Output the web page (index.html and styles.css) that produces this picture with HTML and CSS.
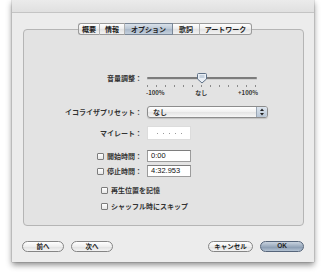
FILE: index.html
```html
<!DOCTYPE html>
<html lang="ja">
<head>
<meta charset="utf-8">
<link rel="stylesheet" href="styles.css">
</head>
<body>
<div class="window">
  <div class="titlebar"></div>
  <div class="tabbox">
    <div class="tabs">
      <span class="tab t1">概要</span>
      <span class="tab t2">情報</span>
      <span class="tab t3 sel">オプション</span>
      <span class="tab t4">歌詞</span>
      <span class="tab t5">アートワーク</span>
    </div>
    <div class="form">
      <div class="row r-vol">
        <div class="lbl">音量調整：</div>
        <div class="slider">
          <svg width="112" height="12" viewBox="0 0 112 12">
            <rect x="1" y="5" width="110" height="2" rx="1" fill="#7c7c7c"/>
            <rect x="1" y="7" width="110" height="1" fill="#d0d0d0"/>
            <path d="M52.5 1.5 h7 a1 1 0 0 1 1 1 v4.5 l-4.5 4 l-4.5 -4 v-4.5 a1 1 0 0 1 1 -1 z" fill="#e9eef4" stroke="#5f7187" stroke-width="1"/>
            <path d="M53.5 3 h5 v3 h-5z" fill="#c4d0dd"/>
          </svg>
        </div>
      </div>
      <div class="row r-scale">
        <div class="lbl"></div>
        <div class="scale">
          <svg class="ticks" width="112" height="4" viewBox="0 0 112 4">
            <g fill="#8a8a8a">
              <rect x="1" y="0" width="1" height="2"/><rect x="10" y="0" width="1" height="2"/><rect x="19" y="0" width="1" height="2"/><rect x="28" y="0" width="1" height="2"/><rect x="37" y="0" width="1" height="2"/><rect x="46" y="0" width="1" height="2"/><rect x="55" y="0" width="1" height="2"/><rect x="64" y="0" width="1" height="2"/><rect x="73" y="0" width="1" height="2"/><rect x="82" y="0" width="1" height="2"/><rect x="91" y="0" width="1" height="2"/><rect x="100" y="0" width="1" height="2"/><rect x="109" y="0" width="1" height="2"/>
            </g>
          </svg>
          <div class="scale-labels"><span>-100%</span><span>なし</span><span>+100%</span></div>
        </div>
      </div>
      <div class="row r-eq">
        <div class="lbl">イコライザプリセット：</div>
        <div class="popup"><span>なし</span><span class="stepper"><svg width="10" height="10" viewBox="0 0 10 10"><path d="M5 1.5 L7 4 H3 Z M5 8.5 L7 6 H3 Z" fill="#222"/></svg></span></div>
      </div>
      <div class="row r-rate">
        <div class="lbl">マイレート：</div>
        <div class="rating"><i></i><i></i><i></i><i></i><i></i></div>
      </div>
      <div class="row r-start">
        <div class="lbl"><span class="cb"></span>開始時間：</div>
        <div class="field">0:00</div>
      </div>
      <div class="row r-stop">
        <div class="lbl"><span class="cb"></span>停止時間：</div>
        <div class="field">4:32.953</div>
      </div>
      <div class="row r-resume">
        <div class="check"><span class="cb"></span>再生位置を記憶</div>
      </div>
      <div class="row r-shuffle">
        <div class="check"><span class="cb"></span>シャッフル時にスキップ</div>
      </div>
    </div>
  </div>
  <div class="buttons">
    <span class="btn b-prev">前へ</span>
    <span class="btn b-next">次へ</span>
    <span class="spacer"></span>
    <span class="btn b-cancel">キャンセル</span>
    <span class="btn b-ok">OK</span>
  </div>
</div>
</body>
</html>
```
FILE: styles.css
```css
html, body {
  margin: 0;
  padding: 0;
  background: #ffffff;
}
body {
  width: 325px;
  height: 272px;
  overflow: hidden;
  font-family: "Noto Sans CJK JP", "Liberation Sans", sans-serif;
  font-size: 7px;
  font-weight: bold;
  color: #333333;
}
.window {
  margin-left: 12px;
  width: 302px;
  height: 262px;
  background: #ececec;
  box-shadow: 0 3px 6px rgba(0,0,0,0.45), 0 0 1px rgba(0,0,0,0.5);
  display: flex;
  flex-direction: column;
}
.titlebar {
  background: linear-gradient(#ebebeb, #e0e0e0);
  border-bottom: 1px solid #c4c4c4;
  box-sizing: border-box;
  height: 13px;
}
.tabbox {
  margin: 16px 10px 0 11px;
  height: 197px;
  box-sizing: border-box;
  border: 1px solid #b5b5b5;
  border-radius: 4px;
  background: #e3e3e3;
  display: flex;
  flex-direction: column;
}
.tabs {
  display: flex;
  justify-content: center;
  margin: -7px 0 0 0;
  height: 12px;
  padding-left: 3px;
}
.tab {
  height: 12px;
  box-sizing: border-box;
  border-top: 1px solid #9a9a9a;
  border-bottom: 1px solid #9a9a9a;
  border-right: 1px solid #b0b0b0;
  background: linear-gradient(#ffffff, #ececec 50%, #e2e2e2 51%, #f2f2f2);
  display: flex;
  align-items: center;
  justify-content: center;
  font-size: 7px;
  line-height: 1;
  color: #222;
}
.t1 { width: 22px; border-left: 1px solid #9a9a9a; border-radius: 3px 0 0 3px; }
.t2 { width: 25px; }
.t3 { width: 48px; }
.t4 { width: 27px; }
.t5 { width: 52px; border-right: 1px solid #9a9a9a; border-radius: 0 3px 3px 0; }
.tab.sel {
  background: linear-gradient(#d9e1ea, #b9c6d4 50%, #a9b8c9 51%, #c3cfdc);
  border-color: #7a8797;
}
.form {
  display: flex;
  flex-direction: column;
}
.row {
  display: flex;
  align-items: center;
}
.lbl {
  width: 118px;
  text-align: right;
  padding-right: 5px;
  white-space: nowrap;
  display: flex;
  align-items: center;
  justify-content: flex-end;
}
.r-vol { margin-top: 37px; height: 12px; }
.slider { height: 12px; margin-left: -1px; }
.slider svg { display: block; }
.r-scale { height: 12px; align-items: flex-start; }
.scale { width: 112px; margin-left: -1px; }
.ticks { display: block; margin-top: 1px; }
.scale-labels {
  display: flex;
  justify-content: space-between;
  font-size: 6px;
  line-height: 7px;
  color: #333;
}
.r-eq { margin-top: 10px; height: 12px; }
.popup {
  width: 121px;
  height: 12px;
  box-sizing: border-box;
  border: 1px solid #8c8c8c;
  border-radius: 3px;
  background: linear-gradient(#ffffff, #f0f0f0 50%, #e4e4e4 51%, #f6f6f6);
  display: flex;
  align-items: center;
  justify-content: space-between;
  padding-left: 5px;
  box-shadow: 0 1px 1px rgba(0,0,0,0.15);
}
.stepper {
  width: 11px;
  height: 10px;
  border-left: 1px solid #9aa6b4;
  background: linear-gradient(#dde5ee, #b8c6d6);
  border-radius: 0 2px 2px 0;
  box-sizing: border-box;
  display: flex;
}
.stepper svg { display: block; }
.r-rate { margin-top: 8px; height: 14px; }
.rating {
  width: 44px;
  height: 14px;
  box-sizing: border-box;
  background: #ffffff;
  border: 1px solid #dcdcdc;
  display: flex;
  align-items: center;
  justify-content: center;
  gap: 5px;
}
.rating i {
  width: 1px;
  height: 1px;
  background: #9a9a9a;
}
.r-start { margin-top: 10px; height: 12px; }
.r-stop { margin-top: 3px; height: 12px; }
.field {
  width: 44px;
  height: 12px;
  box-sizing: border-box;
  background: #ffffff;
  border: 1px solid #9c9c9c;
  border-top-color: #7e7e7e;
  font-weight: normal;
  font-family: "Liberation Sans", sans-serif;
  font-size: 7.5px;
  line-height: 10px;
  padding-left: 3px;
  color: #111;
}
.cb {
  display: inline-block;
  width: 7px;
  height: 7px;
  box-sizing: border-box;
  border: 1px solid #7c7c7c;
  border-radius: 1px;
  background: linear-gradient(#ffffff, #e6e6e6);
  margin-right: 3px;
  flex: none;
}
.check {
  display: flex;
  align-items: center;
  padding-left: 77px;
}
.r-resume { margin-top: 7px; height: 12px; }
.r-shuffle { margin-top: 4px; height: 12px; }
.buttons {
  display: flex;
  align-items: center;
  margin: 14px 10px 0 10px;
  height: 12px;
}
.spacer { flex: 1; }
.btn {
  height: 11px;
  box-sizing: border-box;
  border: 1px solid #858585;
  border-radius: 6px;
  background: linear-gradient(#ffffff, #eeeeee 50%, #e0e0e0 51%, #f4f4f4);
  display: flex;
  align-items: center;
  justify-content: center;
  font-size: 6.5px;
  line-height: 1;
  color: #222;
}
.b-prev { width: 42px; }
.b-next { width: 42px; margin-left: 7px; }
.b-cancel { width: 45px; }
.b-ok {
  width: 44px;
  margin-left: 7px;
  border-color: #56657a;
  background: linear-gradient(#c9d3df, #9aaabd 50%, #8597ad 51%, #b3c2d3);
  font-family: "Liberation Sans", sans-serif;
}
```
